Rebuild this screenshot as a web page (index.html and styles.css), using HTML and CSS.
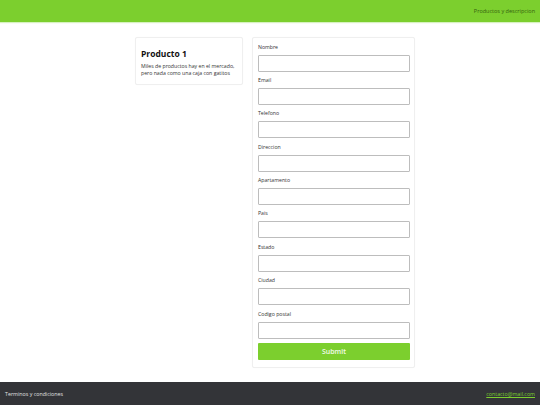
FILE: index.html
```html
<!DOCTYPE html>
<html lang="es">
<head>
<meta charset="utf-8">
<title>Productos</title>
<link rel="stylesheet" href="styles.css">
</head>
<body>
<div class="page">
  <header class="topbar">
    <span class="topbar-link">Productos y descripcion</span>
  </header>
  <main class="main">
    <div class="columns">
      <section class="card product">
        <h2 class="product-title">Producto 1</h2>
        <p class="product-text">Miles de productos hay en el mercado, pero nada como una caja con gatitos</p>
      </section>
      <form class="card form">
        <div class="field"><label class="label">Nombre</label><input class="input" type="text"></div>
        <div class="field"><label class="label">Email</label><input class="input" type="text"></div>
        <div class="field"><label class="label">Telefono</label><input class="input" type="text"></div>
        <div class="field"><label class="label">Direccion</label><input class="input" type="text"></div>
        <div class="field"><label class="label">Apartamento</label><input class="input" type="text"></div>
        <div class="field"><label class="label">Pais</label><input class="input" type="text"></div>
        <div class="field"><label class="label">Estado</label><input class="input" type="text"></div>
        <div class="field"><label class="label">Ciudad</label><input class="input" type="text"></div>
        <div class="field"><label class="label">Codigo postal</label><input class="input" type="text"></div>
        <button class="submit" type="button">Submit</button>
      </form>
    </div>
  </main>
  <footer class="footer">
    <span class="footer-text">Terminos y condiciones</span>
    <a class="footer-mail" href="#">contacto@mail.com</a>
  </footer>
</div>
</body>
</html>
```
FILE: styles.css
```css
* { box-sizing: border-box; }
html, body { margin: 0; padding: 0; }
body {
  font-family: "Open Sans", "Noto Sans", sans-serif;
  background: #ffffff;
  color: #333;
}
.page {
  height: 405px;
  display: flex;
  flex-direction: column;
}
.topbar {
  height: 22px;
  background: #7ccf2e;
  display: flex;
  align-items: center;
  justify-content: flex-end;
  padding-right: 5px;
  box-shadow: 0 1px 1px rgba(124, 207, 46, 0.3);
}
.topbar-link {
  font-size: 5.5px;
  color: #356210;
}
.main {
  flex: 1;
  padding-top: 15px;
}
.columns {
  margin-left: 135px;
  display: flex;
  align-items: flex-start;
  gap: 9px;
}
.card {
  background: #fff;
  border: 1px solid #efefef;
  border-radius: 2px;
  box-shadow: 0 0 1px rgba(0,0,0,0.04);
}
.product {
  width: 108px;
  padding: 10.5px 5px 7px 5px;
}
.product-title {
  margin: 0 0 4px 0;
  font-size: 8.5px;
  line-height: 10px;
  font-weight: 700;
  color: #111;
}
.product-text {
  margin: 0;
  font-size: 5.2px;
  line-height: 7px;
  color: #333;
}
.form {
  width: 163px;
  padding: 5px 5px 7px 5px;
  margin-top: -0.5px;
}
.field {
  display: flex;
  flex-direction: column;
  margin-bottom: 4.4px;
}
.label {
  font-size: 5.2px;
  line-height: 8px;
  height: 8px;
  margin-bottom: 4px;
  color: #333;
}
.input {
  height: 17px;
  width: 152px;
  border: 1px solid #bdbdbd;
  border-radius: 1px;
  padding: 0;
  margin: 0;
  background: #fff;
}
.submit {
  display: block;
  margin-top: 1.8px;
  width: 152px;
  height: 17px;
  border: none;
  border-radius: 1px;
  background: #7ccf2e;
  color: #f4fbee;
  font-family: "Open Sans", "Noto Sans", sans-serif;
  font-weight: 600;
  font-size: 7px;
  padding: 0;
}
.footer {
  height: 23px;
  background: #333438;
  display: flex;
  align-items: center;
  justify-content: space-between;
  padding: 0 5px;
}
.footer-text {
  font-size: 5.3px;
  color: #e0e0e0;
}
.footer-mail {
  font-size: 5.3px;
  color: #7ccf2e;
  text-decoration: underline;
}
```
